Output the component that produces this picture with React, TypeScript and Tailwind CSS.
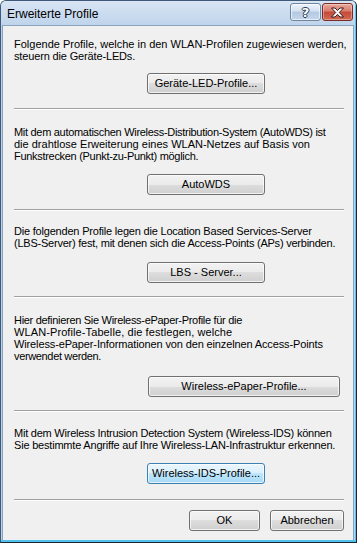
import type { ReactNode } from "react"

function Btn({ className, focus, children }: { className: string; focus?: boolean; children: ReactNode }) {
    return (
        <button
            className={
                "h-[21px] rounded-[3px] border text-[11px] leading-none text-black shadow-[inset_0_0_0_1px_rgba(255,255,255,0.7)] " +
                (focus
                    ? "border-[#3c7fb1] bg-[linear-gradient(to_bottom,#eaf6fd_0%,#d9f0fc_50%,#bee6fd_50%,#a7d9f5_100%)] "
                    : "border-[#707070] bg-[linear-gradient(to_bottom,#f2f2f2_0%,#ebebeb_50%,#dddddd_50%,#cfcfcf_100%)] ") +
                className
            }
        >
            {children}
        </button>
    )
}

function Separator() {
    return <div className="h-[2px] border-t border-b border-t-[#a0a0a0] border-b-white" />
}

// one text line, tracking tuned per line to match the dialog font's widths
function L({ t, children }: { t: string; children: ReactNode }) {
    return <span className={"block whitespace-nowrap " + t}>{children}</span>
}

export default function App() {
    return (
        <div className="w-[357px] h-[543px] font-['Liberation_Sans',Arial,sans-serif] text-[11px] leading-[12px] text-black">
            <div className="h-full flex flex-col rounded-t-[6px] border border-[#3e5a78] border-r-[#1c2530] border-b-[#1c2530] bg-[#bcd2ea] overflow-hidden">
                <div className="flex-1 flex flex-col border-r border-b-2 border-r-[#57c6ef] border-b-[#4fc3ee]">
                    {/* Title bar */}
                    <div className="h-[24px] flex items-start bg-[linear-gradient(to_bottom,#d8e5f4,#bfd4eb)] pr-[2px]">
                        <div className="pl-[6px] pt-[6px] text-[12px] leading-[14px] text-black">Erweiterte Profile</div>
                        <div className="ml-auto mt-[2px] flex gap-[1px]">
                            <div className="w-[31px] h-[18px] rounded-[3px] border border-[#6f86a3] bg-[linear-gradient(to_bottom,#eef3fa_0%,#d4e1f1_45%,#b4c9e3_50%,#c4d6ec_100%)] shadow-[inset_0_0_0_1px_rgba(255,255,255,0.6)] flex items-center justify-center">
                                <span className="text-[13px] leading-none font-bold text-white font-['DejaVu_Sans',sans-serif] [text-shadow:1px_0_0_#2b3a4c,-1px_0_0_#2b3a4c,0_1px_0_#2b3a4c,0_-1px_0_#2b3a4c]">?</span>
                            </div>
                            <div className="w-[31px] h-[18px] rounded-[3px] border border-[#7a2b23] bg-[linear-gradient(to_bottom,#e9a99c_0%,#d97a6b_45%,#c24a37_50%,#d06a55_100%)] shadow-[inset_0_0_0_1px_rgba(255,255,255,0.35)] flex items-center justify-center">
                                <svg width="15" height="11" viewBox="0 0 15 11">
                                    <path
                                        d="M1.5 1 H5 L7.5 3.6 L10 1 H13.5 L9.3 5.5 L13.5 10 H10 L7.5 7.4 L5 10 H1.5 L5.7 5.5 Z"
                                        fill="#ffffff"
                                        stroke="#3b1d1a"
                                        strokeWidth="1"
                                        strokeLinejoin="round"
                                    />
                                </svg>
                            </div>
                        </div>
                    </div>

                    {/* Content */}
                    <div className="flex-1 mx-[1px] border-x border-t border-[#8aa3bf] bg-[#f0f0f0] pl-[11px] pr-[9px] flex flex-col">
                        {/* Geräte-LEDs */}
                        <div className="pt-[12px] pb-[14px]">
                            <p>
                                <L t="tracking-[0px]">Folgende Profile, welche in den WLAN-Profilen zugewiesen werden,</L>
                                <L t="tracking-[-0.15px]">steuern die Geräte-LEDs.</L>
                            </p>
                            <div className="mt-[11px] pl-[133px] flex">
                                <Btn className="w-[118px]">Geräte-LED-Profile...</Btn>
                            </div>
                        </div>
                        <Separator />

                        {/* AutoWDS */}
                        <div className="pt-[16px] pb-[14px]">
                            <p>
                                <L t="tracking-[-0.3px]">Mit dem automatischen Wireless-Distribution-System (AutoWDS) ist</L>
                                <L t="tracking-[0px]">die drahtlose Erweiterung eines WLAN-Netzes auf Basis von</L>
                                <L t="tracking-[-0.3px]">Funkstrecken (Punkt-zu-Punkt) möglich.</L>
                            </p>
                            <div className="mt-[12px] pl-[133px] flex">
                                <Btn className="w-[118px]">AutoWDS</Btn>
                            </div>
                        </div>
                        <Separator />

                        {/* LBS */}
                        <div className="pt-[14px] pb-[13px]">
                            <p>
                                <L t="tracking-[-0.2px]">Die folgenden Profile legen die Location Based Services-Server</L>
                                <L t="tracking-[-0.23px]">(LBS-Server) fest, mit denen sich die Access-Points (APs) verbinden.</L>
                            </p>
                            <div className="mt-[13px] pl-[133px] flex">
                                <Btn className="w-[118px]">LBS - Server...</Btn>
                            </div>
                        </div>
                        <Separator />

                        {/* ePaper */}
                        <div className="pt-[16px] pb-[13px]">
                            <p>
                                <L t="tracking-[-0.3px]">Hier definieren Sie Wireless-ePaper-Profile für die</L>
                                <L t="tracking-[0.1px]">WLAN-Profile-Tabelle, die festlegen, welche</L>
                                <L t="tracking-[-0.13px]">Wireless-ePaper-Informationen von den einzelnen Access-Points</L>
                                <L t="tracking-[-0.35px]">verwendet werden.</L>
                            </p>
                            <div className="mt-[14px] pl-[134px] flex">
                                <Btn className="w-[192px]">Wireless-ePaper-Profile...</Btn>
                            </div>
                        </div>
                        <Separator />

                        {/* IDS */}
                        <div className="pt-[15px] pb-[15px]">
                            <p>
                                <L t="tracking-[-0.23px]">Mit dem Wireless Intrusion Detection System (Wireless-IDS) können</L>
                                <L t="tracking-[-0.2px]">Sie bestimmte Angriffe auf Ihre Wireless-LAN-Infrastruktur erkennen.</L>
                            </p>
                            <div className="mt-[12px] pl-[133px] flex">
                                <Btn className="w-[118px]" focus>
                                    Wireless-IDS-Profile...
                                </Btn>
                            </div>
                        </div>
                        <Separator />

                        {/* Footer */}
                        <div className="pt-[9px] flex justify-end gap-[10px]">
                            <Btn className="w-[71px]">OK</Btn>
                            <Btn className="w-[74px]">Abbrechen</Btn>
                        </div>
                    </div>
                </div>
            </div>
        </div>
    )
}
